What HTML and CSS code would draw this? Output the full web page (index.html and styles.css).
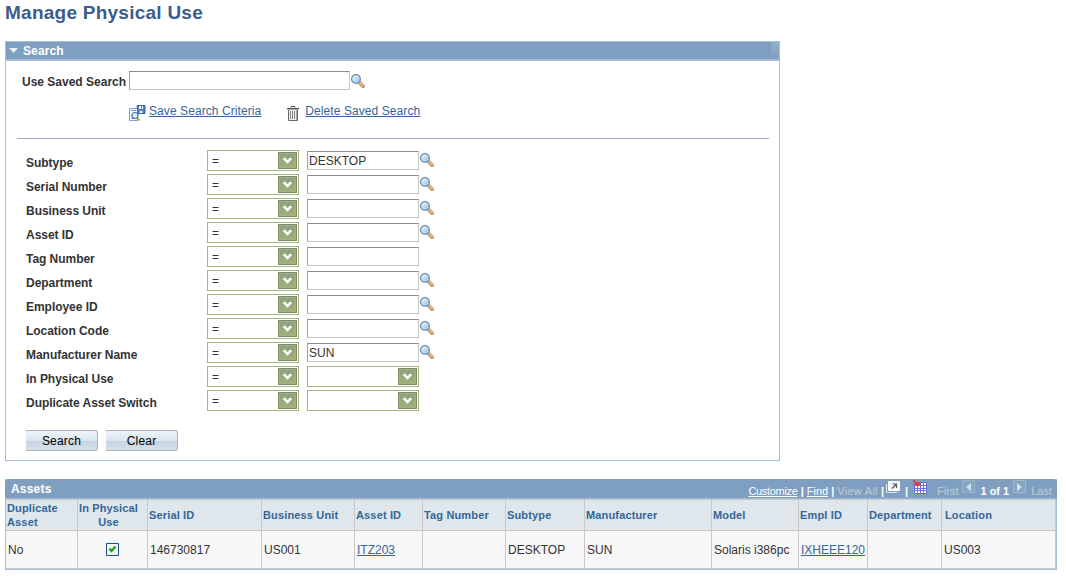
FILE: index.html
```html
<!DOCTYPE html>
<html lang="en">
<head>
    <meta charset="UTF-8">
    <title>Manage Physical Use</title>
    <link rel="stylesheet" href="styles.css">
</head>
<body>

    <!-- Shared icons -->
    <svg class="icon-defs" width="0" height="0">
        <defs>
            <linearGradient id="lensFill" x1="0" y1="0" x2="1" y2="1">
                <stop offset="0" stop-color="#f4fbff"/>
                <stop offset="1" stop-color="#84bff0"/>
            </linearGradient>
        </defs>
        <symbol id="lookup" viewBox="0 0 14 14">
            <path d="M8.8 8.800l3.400 3.400" stroke="#8a8580" stroke-width="3.600" stroke-linecap="round"/>
            <path d="M9.200 8.800l3.200 3.200" stroke="#f3b26b" stroke-width="2.400" stroke-linecap="round"/>
            <circle cx="5" cy="5" r="4.400" fill="url(#lensFill)" stroke="#75899f" stroke-width="1.200"/>
        </symbol>
        <symbol id="chevron" viewBox="0 0 9 7">
            <path d="M.8 1.200l3.700 3.700 3.700-3.700" fill="none" stroke="#fff" stroke-width="2.500"/>
        </symbol>
    </svg>

    <h1>Manage Physical Use</h1>

    <section class="search-panel">
        <h2><svg class="collapse" width="9" height="5"><path d="M0 0h9L4.5 5z" fill="#e4f3f3"/></svg>Search</h2>

        <div class="saved-search">
            <label for="savedSearch">Use Saved Search</label>
            <input type="text" id="savedSearch">
            <svg class="lookup"><use href="#lookup"/></svg>
        </div>

        <div class="saved-links">
            <svg class="save-icon" width="17" height="17" viewBox="0 0 17 17">
                <path d="M.5 3.5h8v12h-8z" fill="#f3f8ff" stroke="#7ba4dc"/>
                <path d="M2 5.5h5M2 13.5h3" stroke="#7ba4dc"/>
                <path d="M8 .5h8v8h-7z" fill="#4c7fc9" stroke="#3566ae"/>
                <path d="M10 1h4v3h-4zM10.500 6h3v2h-3z" fill="#eef5ff"/>
                <path d="M12 1.500h1v2h-1z" fill="#3566ae"/>
                <path d="M8 13l2.500 2.500" stroke="#c2a62c" stroke-width="2"/>
                <circle cx="6" cy="10.500" r="3" fill="#d9edff" stroke="#4574ac" stroke-width="1.200"/>
            </svg>
            <a href="#">Save Search Criteria</a>
            <svg class="trash-icon" width="12" height="15" viewBox="0 0 12 15">
                <path d="M4 1.500V.5h4v1M0 2.500h12" fill="none" stroke="#555"/>
                <path d="M.5 3.500h11" stroke="#aaa"/>
                <path d="M1.500 4v10.500h9V4" fill="#eee" stroke="#666"/>
                <path d="M3.500 5v8M5.500 5v8M7.500 5v8" stroke="#888"/>
                <path d="M9.500 4v10" stroke="#aaa"/>
            </svg>
            <a href="#">Delete Saved Search</a>
        </div>

        <hr>

        <div class="criteria">
            <div class="row"><label>Subtype</label><span class="select">=<i><svg><use href="#chevron"/></svg></i></span><input type="text" value="DESKTOP"><svg class="lookup"><use href="#lookup"/></svg></div>
            <div class="row"><label>Serial Number</label><span class="select">=<i><svg><use href="#chevron"/></svg></i></span><input type="text"><svg class="lookup"><use href="#lookup"/></svg></div>
            <div class="row"><label>Business Unit</label><span class="select">=<i><svg><use href="#chevron"/></svg></i></span><input type="text"><svg class="lookup"><use href="#lookup"/></svg></div>
            <div class="row"><label>Asset ID</label><span class="select">=<i><svg><use href="#chevron"/></svg></i></span><input type="text"><svg class="lookup"><use href="#lookup"/></svg></div>
            <div class="row"><label>Tag Number</label><span class="select">=<i><svg><use href="#chevron"/></svg></i></span><input type="text"></div>
            <div class="row"><label>Department</label><span class="select">=<i><svg><use href="#chevron"/></svg></i></span><input type="text"><svg class="lookup"><use href="#lookup"/></svg></div>
            <div class="row"><label>Employee ID</label><span class="select">=<i><svg><use href="#chevron"/></svg></i></span><input type="text"><svg class="lookup"><use href="#lookup"/></svg></div>
            <div class="row"><label>Location Code</label><span class="select">=<i><svg><use href="#chevron"/></svg></i></span><input type="text"><svg class="lookup"><use href="#lookup"/></svg></div>
            <div class="row"><label>Manufacturer Name</label><span class="select">=<i><svg><use href="#chevron"/></svg></i></span><input type="text" value="SUN"><svg class="lookup"><use href="#lookup"/></svg></div>
            <div class="row"><label>In Physical Use</label><span class="select">=<i><svg><use href="#chevron"/></svg></i></span><span class="select wide"><i><svg><use href="#chevron"/></svg></i></span></div>
            <div class="row"><label>Duplicate Asset Switch</label><span class="select">=<i><svg><use href="#chevron"/></svg></i></span><span class="select wide"><i><svg><use href="#chevron"/></svg></i></span></div>
        </div>

        <div class="buttons">
            <button>Search</button>
            <button>Clear</button>
        </div>
    </section>

    <section class="assets">
        <header>
            <h2>Assets</h2>
            <div class="grid-nav">
                <a class="customize" href="#">Customize</a><b>|</b><a href="#">Find</a><b>|</b><span class="off all">View All</span><b>|</b>
                <svg class="popup-icon" width="14" height="12" viewBox="0 0 14 12">
                    <path d="M.5 3v8.500H11" fill="none" stroke="#dfe8f2"/>
                    <path d="M2.500.5h11v9h-11z" fill="#f5f6f8" stroke="#fff"/>
                    <path d="M6 7.500l4-4M6.500 3h4v4" fill="none" stroke="#4e5c70" stroke-width="1.200"/>
                </svg>
                <b class="bar">|</b>
                <svg class="grid-icon" width="14" height="14" viewBox="0 0 14 14">
                    <path d="M1 2h13v12H1z" fill="#6a70cf"/>
                    <path d="M2 6h2v2H2zM5 6h2v2H5zM8 6h2v2H8zM11 6h2v2h-2zM2 9h2v1H2zM5 9h2v1H5zM8 9h2v1H8zM11 9h2v1h-2zM2 11h2v2H2zM5 11h2v2H5zM8 11h2v2H8zM11 11h2v2h-2zM8 3h2v2H8zM11 3h2v2h-2z" fill="#fff"/>
                    <path d="M0 0l4 4" stroke="#e43c42" stroke-width="2"/>
                    <path d="M6 1v5H1z" fill="#e43c42"/>
                </svg>
                <span class="off first">First</span>
                <span class="page-btn"><svg width="5" height="8"><path d="M5 0v8L0 4z" fill="#d3e3ea"/></svg></span>
                <strong>1 of 1</strong>
                <span class="page-btn"><svg width="5" height="8"><path d="M0 0v8l5-4z" fill="#d3e3ea"/></svg></span>
                <span class="off last">Last</span>
            </div>
        </header>
        <table>
            <colgroup>
                <col class="c-dup"><col class="c-use"><col class="c-serial"><col class="c-unit"><col class="c-asset"><col class="c-tag"><col class="c-subtype"><col class="c-maker"><col class="c-model"><col class="c-empl"><col class="c-dept"><col class="c-loc">
            </colgroup>
            <thead>
                <tr>
                    <th>Duplicate Asset</th>
                    <th class="center">In Physical Use</th>
                    <th>Serial ID</th>
                    <th>Business Unit</th>
                    <th>Asset ID</th>
                    <th>Tag Number</th>
                    <th>Subtype</th>
                    <th>Manufacturer</th>
                    <th>Model</th>
                    <th>Empl ID</th>
                    <th>Department</th>
                    <th class="loc">Location</th>
                </tr>
            </thead>
            <tbody>
                <tr>
                    <td>No</td>
                    <td class="center"><svg class="check" width="13" height="13" viewBox="0 0 13 13"><path d="M.5.5h12v12H.5z" fill="#f4f4f1" stroke="#1c5180"/><path d="M3.500 5.500l2 2.500 4-4.500" fill="none" stroke="#21a121" stroke-width="2.300"/></svg></td>
                    <td>146730817</td>
                    <td>US001</td>
                    <td><a href="#">ITZ203</a></td>
                    <td></td>
                    <td>DESKTOP</td>
                    <td>SUN</td>
                    <td>Solaris i386pc</td>
                    <td><a href="#">IXHEEE120</a></td>
                    <td></td>
                    <td>US003</td>
                </tr>
            </tbody>
        </table>
    </section>

</body>
</html>
```
FILE: styles.css
```css
* {
    box-sizing: border-box;
}

body {
    margin: 0;
    padding: 0 0 0 5px;
    background-color: #fff;
    font-family: "Liberation Sans", Arial, sans-serif;
    font-size: 12px;
    color: #333;
}

.icon-defs {
    height: 0;
}

h1 {
    margin: 0;
    height: 41px;
    padding-top: 1px;
    font-size: 19px;
    line-height: 24px;
    letter-spacing: 0.25px;
    color: #3b5c8c;
}

h2 {
    margin: 0;
    font-size: 12px;
    color: #fff;
}

a {
    color: #336699;
    text-decoration: underline;
}

svg {
    display: block;
    flex: none;
}

/* Search box */
.search-panel {
    width: 775px;
    height: 420px;
    border: 1px solid #a3bddb;
}

.search-panel h2 {
    display: flex;
    align-items: center;
    height: 19px;
    padding-left: 3px;
    border-bottom: 2px solid #a3bddb;
    background: linear-gradient(#93b0c8, #7f9fc1) right / 8px 100% no-repeat #7f9fc1;
    letter-spacing: 0.1px;
}

.collapse {
    margin-right: 5px;
}

input {
    height: 19px;
    padding: 0 1px;
    border: 1px solid #c6c6c6;
    border-top-color: #8e8e8e;
    border-left-color: #a0a0a0;
    background-color: #fff;
    font-family: inherit;
    font-size: 12px;
    color: #333;
}

.lookup {
    width: 14px;
    height: 14px;
    margin-left: 1px;
}

.saved-search {
    display: flex;
    align-items: center;
    margin-top: 10px;
    padding-left: 16px;
}

.saved-search label {
    width: 107px;
    padding-top: 3px;
    font-weight: bold;
}

.saved-search input {
    width: 221px;
}

.saved-links {
    display: flex;
    height: 34px;
    margin-top: 14px;
    padding-left: 123px;
}

.save-icon {
    margin: 1px 3px 0 0;
}

.trash-icon {
    margin: 2px 6px 0 26px;
}

.saved-links a {
    line-height: 14px;
    letter-spacing: 0.08px;
}

hr {
    width: 752px;
    height: 1px;
    margin: 0 0 0 11px;
    border: 0;
    background-color: #9fabc2;
}

.criteria {
    padding: 11px 0 0 20px;
}

.row {
    display: flex;
    align-items: flex-start;
    height: 24px;
}

.row label {
    width: 181px;
    padding-top: 6px;
    line-height: 14px;
    font-weight: bold;
    letter-spacing: -0.04px;
}

.row input {
    width: 112px;
    margin-top: 1px;
}

.row .lookup {
    margin-top: 3px;
}

.select {
    display: flex;
    align-items: center;
    justify-content: space-between;
    width: 92px;
    height: 21px;
    margin-right: 8px;
    padding: 0 1px 0 4px;
    border: 1px solid #a5b77c;
}

.select.wide {
    width: 112px;
    justify-content: flex-end;
}

.select i {
    display: flex;
    align-items: center;
    justify-content: center;
    width: 19px;
    height: 17px;
    border: 1px solid #7c8c64;
    background: linear-gradient(#8ca07a, #a2b37c);
    box-shadow: inset 0 0 0 1px #a3b28b;
}

.select svg {
    width: 9px;
    height: 7px;
}

.buttons {
    display: flex;
    gap: 8px;
    padding: 16px 0 0 20px;
}

button {
    width: 72px;
    height: 21px;
    padding: 0;
    border: 1px solid #aeb2b8;
    border-left: 0;
    border-radius: 0 3px 3px 0;
    background: linear-gradient(#eef4fa, #dce6f0 50%, #c6d3e0 51%, #d6e0ea);
    font-family: inherit;
    font-size: 12px;
    letter-spacing: 0.2px;
    color: #000;
}

/* Results grid */
.assets {
    width: 1052px;
    margin-top: 18px;
    border: 1px solid #a3bddb;
    border-top: 0;
}

.assets header {
    display: flex;
    justify-content: space-between;
    height: 20px;
    margin: 0 -1px;
    padding: 0 5px 0 6px;
    border-bottom: 1px solid #9db8d4;
    border-radius: 3px 3px 0 0;
    background-color: #7f9fc1;
}

.assets h2 {
    line-height: 20px;
    letter-spacing: 0.2px;
}

.grid-nav {
    display: flex;
    padding-top: 5px;
    font-size: 11px;
    line-height: 14px;
    color: #fff;
}

.grid-nav a {
    color: #fff;
}

.grid-nav .customize {
    letter-spacing: -0.3px;
}

.grid-nav b {
    margin: 0 3px;
}

.off {
    color: #c3ccd4;
}

.grid-nav .all {
    letter-spacing: 0.3px;
}

.popup-icon {
    margin: -3px 3px 0 -1px;
}

.grid-nav .bar {
    margin: 0 3px 0 2px;
}

.grid-icon {
    margin: -4px 10px 0 2px;
}

.page-btn {
    display: flex;
    align-items: center;
    justify-content: center;
    width: 13px;
    height: 13px;
    margin: -4px 5px 0 4px;
    background-color: #86a7c2;
    border: 1px solid #9ab7cd;
}

table {
    width: 1050px;
    table-layout: fixed;
    border-spacing: 0;
    border-top: 1px solid #c8c8c8;
}

.c-dup { width: 72px; }
.c-use { width: 70px; }
.c-serial { width: 114px; }
.c-unit { width: 93px; }
.c-asset { width: 68px; }
.c-tag { width: 83px; }
.c-subtype { width: 79px; }
.c-maker { width: 127px; }
.c-model { width: 87px; }
.c-empl { width: 69px; }
.c-dept { width: 74px; }
.c-loc { width: 114px; }

th, td {
    padding: 0 0 0 2px;
    border-right: 1px solid #c8c8c8;
    border-bottom: 1px solid #c8c8c8;
    text-align: left;
    white-space: nowrap;
}

th {
    height: 31px;
    padding-left: 1px;
    background-color: #dfe6ec;
    font-size: 11px;
    line-height: 14px;
    letter-spacing: 0.15px;
    white-space: normal;
    color: #336699;
}

td {
    height: 38px;
    background-color: #f7f7f7;
}

th.center, td.center {
    padding: 0;
    text-align: center;
}

th.center {
    padding-right: 8px;
}

th.loc {
    padding-left: 3px;
}

.check {
    margin: 0 auto;
}
```
